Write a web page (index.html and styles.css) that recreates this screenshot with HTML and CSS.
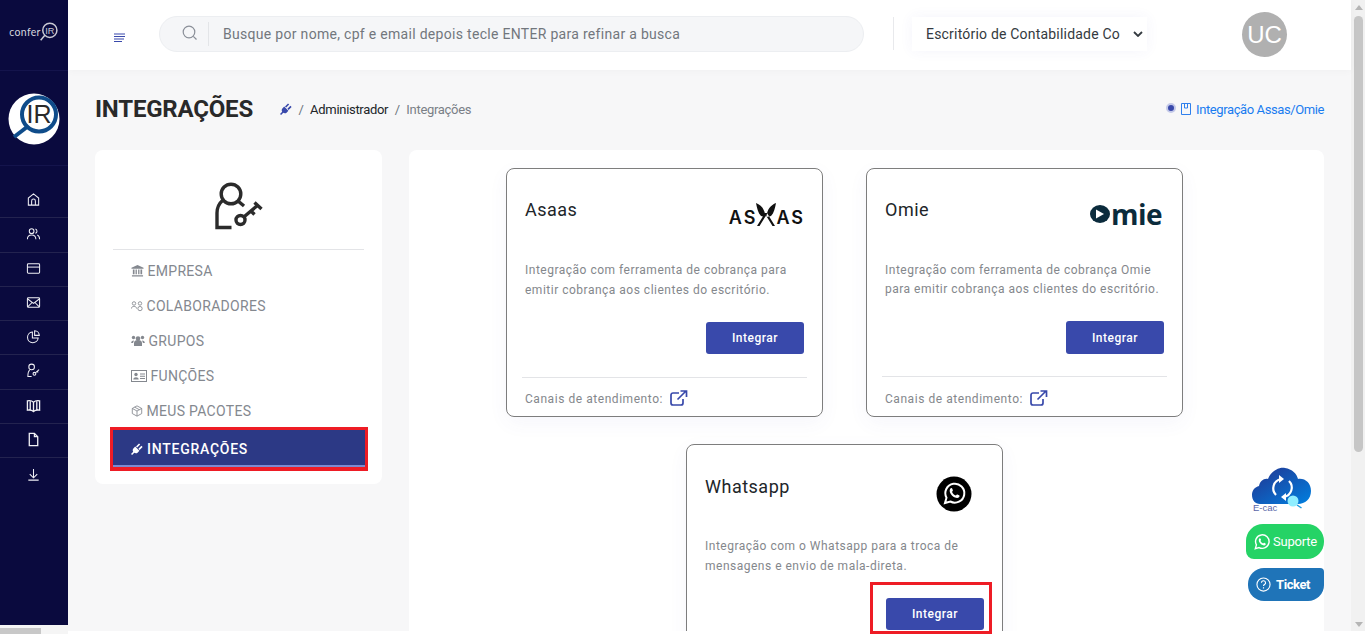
FILE: index.html
```html
<!DOCTYPE html>
<html lang="pt-BR">
  <head>
    <meta charset="utf-8" />
    <title>Integrações</title>
    <link rel="stylesheet" href="styles.css">
  </head>
  <body>
    <div class="app">
      <!-- Sidebar -->
      <aside class="sidebar">
        <div class="sidebar-brand">
          <span class="brand-word">confer</span>
          <svg class="brand-mark" viewBox="0 0 24 24" width="20" height="20" fill="none" stroke="#c9c9d4">
            <circle cx="13" cy="10" r="8.500" stroke-width="1.800"/>
            <path d="M7 16l-5 6" stroke-width="1.800"/>
            <text x="13" y="14" text-anchor="middle" font-size="11" fill="#c9c9d4" stroke="none" font-family="Liberation Sans">IR</text>
          </svg>
        </div>
        <div class="sidebar-logo">
          <svg viewBox="0 0 52 52" width="52" height="52">
            <circle cx="26" cy="26" r="25.500" fill="#fff"/>
            <circle cx="31" cy="21.500" r="17" fill="#fff" stroke="#0f4c8a" stroke-width="4"/>
            <path d="M19 34L6 44" stroke="#0f4c8a" stroke-width="4"/>
            <text x="31" y="30" text-anchor="middle" font-size="25" fill="#2a2a2a" font-family="Liberation Sans">IR</text>
          </svg>
        </div>
        <nav class="sidebar-nav">
          <a class="nav-row"><svg class="nav-icon" viewBox="0 0 16 16"><path d="M2.500 14V6.500L8 2l5.500 4.500V14zM6 14V9.500a2 2 0 0 1 4 0V14"/></svg></a>
          <a class="nav-row"><svg class="nav-icon" viewBox="0 0 16 16"><circle cx="6" cy="5.500" r="2.500"/><path d="M1.500 14c0-6 9-6 9 0M10 3.200a2.400 2.400 0 0 1 0 4.600M12 9.500c1.500.5 2.500 2 2.500 4.500"/></svg></a>
          <a class="nav-row"><svg class="nav-icon" viewBox="0 0 16 16"><rect x="1.500" y="3" width="13" height="10" rx="1"/><path d="M1.500 6.500h13"/></svg></a>
          <a class="nav-row"><svg class="nav-icon" viewBox="0 0 16 16"><rect x="1.500" y="3" width="13" height="10" rx="1"/><path d="M1.500 4l6.500 5 6.500-5M1.500 13l5-5M14.500 13l-5-5"/></svg></a>
          <a class="nav-row"><svg class="nav-icon" viewBox="0 0 16 16"><path d="M6.800 3.300a5.700 5.700 0 1 0 6.200 6.200H6.800z"/><path d="M9.200 1.800a5.200 5.200 0 0 1 5 5h-5z"/></svg></a>
          <a class="nav-row"><svg class="nav-icon" viewBox="0 0 16 16"><circle cx="6" cy="4.200" r="3"/><path d="M4 7.800C2.500 8.500 2 10 2 14.500h4"/><circle cx="9" cy="11.500" r="1.500"/><path d="M10 10.500l4-3.500M12 9l1 1"/></svg></a>
          <a class="nav-row"><svg class="nav-icon nav-icon-bold" viewBox="0 0 16 16"><path d="M8 4.500C6.500 3 4 2.500 1.500 3v10c2.500-.5 5 0 6.500 1.500 1.500-1.500 4-2 6.500-1.500V3C12 2.500 9.500 3 8 4.500zM8 4.500v10M4.500 3v10M11.500 3v10"/></svg></a>
          <a class="nav-row"><svg class="nav-icon nav-icon-bold" viewBox="0 0 16 16"><path d="M3.500 1.500h5.500l3.500 3.500v9.500h-9zM9 1.500V5h3.500"/></svg></a>
          <a class="nav-row"><svg class="nav-icon" viewBox="0 0 16 16"><path d="M8 2v9.500M4 7.500l4 4 4-4M2.500 14h11"/></svg></a>
        </nav>
        <div class="sidebar-scroll"><span></span></div>
      </aside>

      <div class="main">
        <!-- Topbar -->
        <header class="topbar">
          <svg class="menu-toggle" viewBox="0 0 12 10" width="12" height="10"><path d="M0 1h11M0 3.500h11M0 6h10M0 8.500h8" stroke="#3949ab" stroke-width="1.100"/></svg>
          <div class="search">
            <svg class="search-icon" viewBox="0 0 16 16" width="16" height="16" fill="none" stroke="#8a8f98" stroke-width="1.200"><circle cx="7" cy="7" r="5.800"/><path d="M11.300 11.300l3.200 3.200"/></svg>
            <span class="search-text">Busque por nome, cpf e email depois tecle ENTER para refinar a busca</span>
          </div>
          <div class="office">
            <span>Escritório de Contabilidade Co</span>
            <svg viewBox="0 0 10 6" width="10" height="6" fill="none" stroke="#343a40" stroke-width="1.800"><path d="M1 1l4 4 4-4"/></svg>
          </div>
          <div class="avatar">UC</div>
        </header>

        <!-- Content -->
        <main class="content">
          <div class="page-head">
            <h1>INTEGRAÇÕES</h1>
            <ol class="breadcrumb">
              <li>
                <svg class="plug" viewBox="0 0 12 12" width="12" height="12"><path fill="#3949ab" d="M4.200 3.600L8.400 7.800 6.800 9.400C5.700 10.500 4.300 10.500 3.300 9.800L1.100 12 0 10.900 2.200 8.700C1.500 7.700 1.500 6.300 2.600 5.200ZM5 3.400L8 .4 9.200 1.600 6.200 4.600ZM7.400 5.800L10.400 2.800 11.600 4 8.600 7Z"/></svg>
              </li>
              <li class="sep">/</li>
              <li class="crumb-dark">Administrador</li>
              <li class="sep">/</li>
              <li class="crumb-muted">Integrações</li>
            </ol>
            <a class="page-link">
              <span class="radio"></span>
              <svg viewBox="0 0 10 12" width="10" height="12" fill="none" stroke="#2f80ed"><path d="M.5.500h9v11h-9zM3.500.500v4.500h3V.500"/></svg>
              <span>Integração Assas/Omie</span>
            </a>
          </div>

          <div class="columns">
            <section class="menu-card">
              <div class="menu-icon">
                <svg viewBox="0 0 48 48" width="48" height="48" fill="none" stroke="#2b2b2b" stroke-width="3.400">
                  <circle cx="16" cy="12" r="9.800"/>
                  <path d="M7.500 18.500C3.500 22 2 26 2 31v14.500h14.500"/>
                  <path d="M23 19l6 5"/>
                  <circle cx="25.500" cy="38" r="4.500"/>
                  <path d="M28.800 35L43 23M39.500 20.500l7 6.500M35 28l4.500 4.500"/>
                </svg>
              </div>
              <ul class="menu-list">
                <li>
                  <svg class="menu-glyph" viewBox="0 0 14 14" width="13" height="13"><path d="M7 1l6.500 3v1H.5V4zM1 12h12v1.500H1zM2 6h1.800v5H2zM4.900 6h1.400v5H4.900zM7.700 6h1.400v5H7.700zM10.200 6H12v5h-1.800z"/></svg>
                  EMPRESA
                </li>
                <li>
                  <svg class="menu-glyph glyph-line" viewBox="0 0 14 14" width="12" height="12"><circle cx="3.500" cy="4" r="2"/><path d="M.5 10c0-3.500 6-3.500 6 0"/><circle cx="10.500" cy="4" r="2"/><circle cx="10.500" cy="10" r="2.500"/></svg>
                  COLABORADORES
                </li>
                <li>
                  <svg class="menu-glyph" viewBox="0 0 14 12" width="14" height="12"><circle cx="2.500" cy="2.500" r="1.700"/><circle cx="11.500" cy="2.500" r="1.700"/><circle cx="7" cy="3.500" r="2.300"/><path d="M3 11V8c0-2 1.500-3 4-3s4 1 4 3v3zM.2 8c0-1.500.8-2.500 2.800-2.500L2 8zM13.800 8c0-1.500-.8-2.500-2.800-2.500L12 8z"/></svg>
                  GRUPOS
                </li>
                <li>
                  <svg class="menu-glyph" viewBox="0 0 16 12" width="16" height="12"><path fill-rule="evenodd" d="M0 0h16v12H0zM1 1v10h14V1z"/><circle cx="5" cy="4.500" r="1.700"/><path d="M2.300 9.500c0-3 5.400-3 5.400 0zM9 3.500h5v1H9zM9 5.800h5v1H9zM9 8h5v1H9z"/></svg>
                  FUNÇÕES
                </li>
                <li>
                  <svg class="menu-glyph glyph-line" viewBox="0 0 14 14" width="12" height="12"><path d="M7 1l5.500 3v6L7 13l-5.500-3V4zM1.500 4L7 7l5.500-3M7 7v6M4.200 2.500l5.600 3"/></svg>
                  MEUS PACOTES
                </li>
                <li class="menu-active-wrap">
                  <div class="menu-active">
                    <svg class="plug" viewBox="0 0 12 12" width="12" height="12"><path fill="#fff" d="M4.200 3.600L8.400 7.800 6.800 9.400C5.700 10.500 4.300 10.500 3.300 9.800L1.100 12 0 10.900 2.200 8.700C1.500 7.700 1.500 6.300 2.600 5.200ZM5 3.400L8 .4 9.200 1.600 6.200 4.600ZM7.400 5.800L10.400 2.800 11.600 4 8.600 7Z"/></svg>
                    INTEGRAÇÕES
                  </div>
                </li>
              </ul>
            </section>

            <section class="panel">
              <article class="card">
                <div class="card-head">
                  <h2>Asaas</h2>
                  <div class="logo-asaas">
                    <span>AS</span>
                    <svg viewBox="0 0 26 23" width="26" height="23"><path fill="#111" d="M3 0C8 2 12 6 12.500 14L8 13C5 10 4 5 3 0ZM23 0C18 2 14 6 13.500 14L18 13C21 10 22 5 23 0ZM4 23L12 10H14L22 23H19.500L13 12.500 6.500 23Z"/></svg>
                    <span>AS</span>
                  </div>
                </div>
                <p class="card-text">Integração com ferramenta de cobrança para emitir cobrança aos clientes do escritório.</p>
                <div class="card-action"><button class="btn">Integrar</button></div>
                <div class="card-foot">
                  <span>Canais de atendimento:</span>
                  <svg class="ext" viewBox="0 0 18 16" width="18" height="16" fill="none" stroke="#3949ab" stroke-width="1.700"><path d="M9 3H3a2 2 0 0 0-2 2v8a2 2 0 0 0 2 2h8a2 2 0 0 0 2-2V9M7.500 9.500L15.500 1.500M10.500 1h6v6" /></svg>
                </div>
              </article>

              <article class="card card-omie">
                <div class="card-head">
                  <h2>Omie</h2>
                  <div class="logo-omie">
                    <svg viewBox="0 0 20 18" width="20" height="18"><ellipse cx="10" cy="9" rx="10" ry="9" fill="#0b2b3c"/><path fill="#fff" d="M6 4.500l8 4.500-8 4.500z"/></svg>
                    <span>mie</span>
                  </div>
                </div>
                <p class="card-text">Integração com ferramenta de cobrança Omie para emitir cobrança aos clientes do escritório.</p>
                <div class="card-action"><button class="btn">Integrar</button></div>
                <div class="card-foot">
                  <span>Canais de atendimento:</span>
                  <svg class="ext" viewBox="0 0 18 16" width="18" height="16" fill="none" stroke="#3949ab" stroke-width="1.700"><path d="M9 3H3a2 2 0 0 0-2 2v8a2 2 0 0 0 2 2h8a2 2 0 0 0 2-2V9M7.500 9.500L15.500 1.500M10.500 1h6v6" /></svg>
                </div>
              </article>

              <article class="card card-whats">
                <div class="card-head">
                  <h2>Whatsapp</h2>
                  <svg class="logo-whats" viewBox="0 0 36 36" width="36" height="36">
                    <circle cx="18" cy="18" r="17.500" fill="#000"/>
                    <path fill="none" stroke="#fff" stroke-width="2" d="M9 27l1.500-5.300a9.500 9.500 0 1 1 3.800 3.800z"/>
                    <path fill="#fff" d="M14.500 12.500c.8-.8 1.500-.5 1.800.3l.6 1.500c.1.500-.6 1.200-.8 1.600.8 1.700 2 2.800 3.700 3.600.5-.4 1-1.200 1.600-1l1.600.8c.7.400.7 1.100.2 1.800-1 1.200-2.600 1.200-4.200.5-2.300-1-4.200-3-5-5.200-.5-1.500-.3-2.900.5-3.900z"/>
                  </svg>
                </div>
                <p class="card-text">Integração com o Whatsapp para a troca de mensagens e envio de mala-direta.</p>
                <div class="card-action"><button class="btn">Integrar</button></div>
              </article>
            </section>
          </div>
        </main>
      </div>

      <div class="scrollbar">
        <span class="arrow-up"></span>
        <span class="thumb"></span>
        <span class="arrow-down"></span>
      </div>
    </div>

    <!-- Red highlight drawn over the Whatsapp button -->
    <div class="mark-box"></div>

    <!-- Floating shortcuts -->
    <div class="floating">
      <a class="ecac">
        <svg viewBox="0 0 60 42" width="60" height="42">
          <defs>
            <linearGradient id="cloud" x1="0" y1="0" x2="1" y2="1">
              <stop offset="0" stop-color="#23338f"/>
              <stop offset="1" stop-color="#0080e0"/>
            </linearGradient>
          </defs>
          <path fill="url(#cloud)" d="M8 37C3 37 0 33 0 28C0 23 3 20 7 19C8 14 12 11 16 12C19 4 27 0 33 1C40 2 45 7 46 12C53 11 59 16 59 24C59 32 53 37 46 37Z"/>
          <path fill="none" stroke="#fff" stroke-width="2.200" d="M29 12A9.500 9.500 0 0 0 24 28M32 30A9.500 9.500 0 0 0 37 14"/>
          <path fill="#fff" d="M27 8l5 4-5 4zM34 26l-5 4 5 4z"/>
          <circle cx="41" cy="34" r="5.500" fill="#8feeff"/>
          <path stroke="#1d9be0" stroke-width="1.500" d="M45 38l4.500 3"/>
        </svg>
        <span>E-cac</span>
      </a>
      <a class="fab fab-green">
        <svg viewBox="0 0 18 18" width="16" height="16"><path fill="none" stroke="#fff" stroke-width="1.600" d="M1.500 16.500l1.200-4.300a7.600 7.600 0 1 1 3 3z"/><path fill="#fff" d="M6 5.200c.6-.6 1.200-.4 1.400.2l.5 1.200c.1.400-.5 1-.6 1.300.6 1.300 1.600 2.200 3 2.800.4-.3.800-1 1.300-.8l1.300.7c.5.300.5.900.1 1.400-.8 1-2.100 1-3.400.4-1.800-.8-3.300-2.400-4-4.100C5.200 6.400 5.400 5.900 6 5.200z"/></svg>
        <span>Suporte</span>
      </a>
      <a class="fab fab-blue">
        <svg viewBox="0 0 16 16" width="15" height="15" fill="none" stroke="#fff" stroke-width="1.200"><circle cx="8" cy="8" r="7"/><path d="M5.800 6.200a2.200 2.200 0 1 1 3.300 1.900c-.7.400-1.100.8-1.100 1.600M8 11v1.200"/></svg>
        <span>Ticket</span>
      </a>
    </div>
  </body>
</html>
```

FILE: styles.css
```css
* {
  margin: 0;
  padding: 0;
  box-sizing: border-box;
}

html,
body {
  height: 100%;
  overflow: hidden;
}

body {
  font-family: 'Roboto', 'Liberation Sans', sans-serif;
  background-color: #fff;
  color: #212529;
}

.app {
  display: flex;
  height: 634px;
}

/* Sidebar */
.sidebar {
  width: 68px;
  flex-shrink: 0;
  display: flex;
  flex-direction: column;
  background: #fff;
}

.sidebar-brand {
  height: 71px;
  flex-shrink: 0;
  display: flex;
  align-items: center;
  justify-content: center;
  padding-bottom: 7px;
  background: #0a0a3e;
  border-bottom: 1px solid #14144c;
}

.brand-word {
  font-family: 'Lato', sans-serif;
  font-size: 10.500px;
  color: #d5d5de;
  letter-spacing: 0.300px;
}

.brand-mark {
  margin-left: -2px;
}

.sidebar-logo {
  height: 95px;
  flex-shrink: 0;
  padding: 22px 0 0 8px;
  background: #0a0a3e;
  border-bottom: 1px solid #14144c;
}

.sidebar-nav {
  flex: 1;
  padding-top: 18px;
  background: #0a0a3e;
}

.nav-row {
  height: 34.250px;
  padding: 0 1px 2px 0;
  display: flex;
  align-items: center;
  justify-content: center;
  border-bottom: 1px solid #23234f;
}

.nav-row:last-child {
  border-bottom: none;
}

.nav-icon {
  width: 15px;
  height: 15px;
  fill: none;
  stroke: #f0f0f5;
  stroke-width: 1.100;
}

.nav-icon-bold {
  stroke-width: 1.400;
}

.sidebar-scroll {
  height: 9px;
  flex-shrink: 0;
  padding-top: 3px;
  background: #f5f5f5;
}

.sidebar-scroll span {
  display: block;
  width: 41px;
  height: 6px;
  background: #c8c8c8;
}

/* Topbar */
.main {
  flex: 1;
  min-width: 0;
  display: flex;
  flex-direction: column;
}

.topbar {
  height: 70px;
  flex-shrink: 0;
  padding-bottom: 2px;
  display: flex;
  align-items: center;
  background: #fff;
  box-shadow: 0 1px 8px rgba(0, 0, 0, 0.03);
  position: relative;
}

.menu-toggle {
  margin-left: 46px;
  margin-top: 8px;
}

.search {
  width: 705px;
  height: 36px;
  margin-left: 33px;
  display: flex;
  align-items: center;
  background: #f5f6f8;
  border: 1px solid #eceef1;
  border-radius: 18px;
}

.search-icon {
  margin: 0 0 3px 22px;
}

.search-text {
  margin-left: 10px;
  padding: 4px 0 4px 14px;
  border-left: 1px solid #e3e5e8;
  font-size: 14px;
  letter-spacing: 0.300px;
  color: #72777d;
  white-space: nowrap;
}

.office {
  width: 235px;
  height: 34px;
  margin-left: 48px;
  padding: 0 4px 0 14px;
  position: relative;
  display: flex;
  align-items: center;
  justify-content: space-between;
  font-size: 14px;
  letter-spacing: 0.200px;
  color: #343a40;
  background: #fff;
  box-shadow: 0 0 14px rgba(60, 70, 180, 0.06);
}

.office::before {
  content: '';
  position: absolute;
  left: -19px;
  top: 0;
  height: 33px;
  border-left: 1px solid #e8e9ec;
}

.avatar {
  width: 45px;
  height: 45px;
  margin-left: 95px;
  border-radius: 50%;
  background: #b0b0b0;
  color: #fff;
  font-family: 'Liberation Sans', sans-serif;
  font-size: 24px;
  line-height: 45px;
  text-align: center;
}

/* Content */
.content {
  flex: 1;
  min-height: 0;
  overflow: hidden;
  padding: 0 27px;
  background: #f7f7f8;
  margin-bottom: 3px;
}

.page-head {
  height: 80px;
  padding-bottom: 2px;
  display: flex;
  align-items: center;
}

.page-head h1 {
  font-size: 24px;
  font-weight: 700;
  letter-spacing: -0.200px;
  color: #292929;
  width: 185px;
}

.breadcrumb {
  list-style: none;
  display: flex;
  align-items: center;
  gap: 6.500px;
  font-size: 13px;
  letter-spacing: -0.300px;
}

.breadcrumb li {
  display: flex;
}

.crumb-dark {
  color: #212529;
}

.crumb-muted {
  color: #7a7f87;
}

.sep {
  color: #6c757d;
}

.page-link {
  margin-left: auto;
  display: flex;
  align-items: center;
  gap: 5px;
  font-size: 13px;
  letter-spacing: -0.400px;
  color: #1a7cf0;
}

.radio {
  width: 10px;
  height: 10px;
  margin-bottom: 2px;
  border-radius: 50%;
  background: #3949ab;
  border: 2px solid #c5cae9;
}

.columns {
  display: flex;
  align-items: flex-start;
  gap: 27px;
}

/* Left menu card */
.menu-card {
  width: 287px;
  height: 334px;
  flex-shrink: 0;
  background: #fff;
  border-radius: 8px;
  padding: 0 18px;
}

.menu-icon {
  height: 100px;
  display: flex;
  align-items: center;
  justify-content: center;
  padding: 13px 0 0 0;
  border-bottom: 1px solid #e3e4e7;
}

.menu-list {
  list-style: none;
  padding-top: 3px;
}

.menu-list > li {
  height: 35px;
  display: flex;
  align-items: center;
  gap: 3.500px;
  padding-left: 18px;
  font-size: 14px;
  letter-spacing: 0.300px;
  color: #84888f;
}

.menu-glyph {
  fill: #84888f;
  flex-shrink: 0;
}

.glyph-line {
  fill: none;
  stroke: #84888f;
  stroke-width: 1;
}

.menu-list > .menu-active-wrap {
  height: 44px;
  margin-top: -1px;
  padding: 0;
}

.menu-active {
  width: 258px;
  height: 44px;
  margin-left: -3px;
  flex-shrink: 0;
  padding-left: 18px;
  display: flex;
  align-items: center;
  gap: 4px;
  color: #fff;
  font-weight: 500;
  letter-spacing: 0.750px;
  background: #2c3985;
  border: 3px solid #ee1c25;
  border-bottom-width: 4px;
  box-shadow: inset 0 -2px 0 #7c8ad0;
}

/* Right panel */
.panel {
  flex: 1;
  min-width: 0;
  height: 520px;
  display: flex;
  flex-wrap: wrap;
  justify-content: center;
  align-content: flex-start;
  padding: 18px 1px 0 0;
  background: #fff;
  border-radius: 8px;
}

.card {
  width: 317px;
  height: 249px;
  margin: 0 43px 27px 0;
  padding: 0 18px;
  border: 1px solid #7d7d7d;
  border-radius: 8px;
  box-shadow: 0 6px 20px rgba(70, 80, 180, 0.05);
  display: flex;
  flex-direction: column;
}

.card-head {
  height: 92px;
  display: flex;
  justify-content: space-between;
  align-items: flex-start;
  padding-top: 31px;
}

.card-head h2 {
  font-size: 18px;
  font-weight: 400;
  letter-spacing: 0.500px;
  line-height: 20px;
  color: #212529;
}

.logo-asaas {
  margin: 3px -1px 0 0;
  height: 23px;
  display: flex;
  align-items: flex-end;
  font-family: 'Inter', sans-serif;
  font-size: 18px;
  font-weight: 600;
  line-height: 17px;
  letter-spacing: 2px;
  color: #111;
}

.logo-asaas svg {
  margin: 0 -3px 0 -4px;
}

.logo-omie {
  display: flex;
  align-items: center;
  gap: 1px;
  margin: 3px 2px 0 0;
  height: 22px;
  color: #0b2b3c;
  font-family: 'Open Sans', sans-serif;
  font-size: 28px;
  font-weight: 700;
  letter-spacing: -0.500px;
  line-height: 22px;
}

.card-text {
  font-size: 12px;
  line-height: 19.500px;
  letter-spacing: 0.500px;
  color: #84878c;
}

.card-action {
  display: flex;
  justify-content: flex-end;
  margin-top: 22px;
}

.btn {
  width: 98px;
  height: 32px;
  border: none;
  border-radius: 3px;
  background: #3949ab;
  color: #fff;
  font-family: 'Roboto', sans-serif;
  font-size: 12px;
  font-weight: 500;
  letter-spacing: 0.500px;
}

.card-foot {
  margin: 23px -3px 0;
  padding: 14px 3px 0;
  border-top: 1px solid #e3e4e7;
  display: flex;
  align-items: flex-start;
  gap: 7px;
  font-size: 12px;
  letter-spacing: 0.550px;
  color: #84878c;
}

.ext {
  margin-top: -2px;
}

.card-omie .card-text {
  line-height: 19px;
}

.card-omie .btn {
  height: 33px;
}

.card-omie .card-foot {
  margin-top: 22px;
  padding-top: 15px;
}

.card-whats {
  margin-bottom: 0;
}

.card-whats .card-head {
  padding-top: 32px;
}

.logo-whats {
  margin: -1px 12px 0 0;
}

.mark-box {
  position: absolute;
  left: 870px;
  top: 582px;
  width: 122px;
  height: 52px;
  border: 3px solid #ee1c25;
}

/* Page scrollbar */
.scrollbar {
  width: 14px;
  flex-shrink: 0;
  height: 631px;
  padding: 5px 0 0 1px;
  display: flex;
  flex-direction: column;
  align-items: center;
  background: #f1f1f1;
}

.arrow-up {
  border: 4px solid transparent;
  border-top: 0;
  border-bottom: 5px solid #b5b5b5;
}

.thumb {
  width: 9px;
  height: 436px;
  margin-top: 6px;
  border-radius: 5px;
  background: #c6c6c6;
}

.arrow-down {
  margin-top: auto;
  margin-bottom: 4px;
  border: 4px solid transparent;
  border-bottom: 0;
  border-top: 5px solid #b5b5b5;
}

/* Floating shortcuts */
.floating {
  position: absolute;
  top: 467px;
  left: 1246px;
  width: 78px;
  display: flex;
  flex-direction: column;
  align-items: flex-end;
}

.ecac {
  position: relative;
  width: 78px;
  height: 57px;
}

.ecac svg {
  position: absolute;
  left: 6px;
  top: 0;
}

.ecac span {
  position: absolute;
  left: 7px;
  top: 35px;
  font-family: 'Liberation Sans', sans-serif;
  font-size: 9.500px;
  color: #5a66a8;
}

.fab {
  display: flex;
  align-items: center;
  gap: 3px;
  font-size: 13px;
  color: #fff;
}

.fab-green {
  width: 78px;
  height: 35px;
  padding-left: 8px;
  letter-spacing: -0.200px;
  background: #25d366;
  border-radius: 17px 17px 17px 8px;
}

.fab-blue {
  width: 76px;
  height: 33px;
  margin-top: 9px;
  padding-left: 8px;
  gap: 5px;
  font-weight: 700;
  letter-spacing: -0.400px;
  background: #1f74b8;
  border-radius: 16px 4px 16px 16px;
}
```
